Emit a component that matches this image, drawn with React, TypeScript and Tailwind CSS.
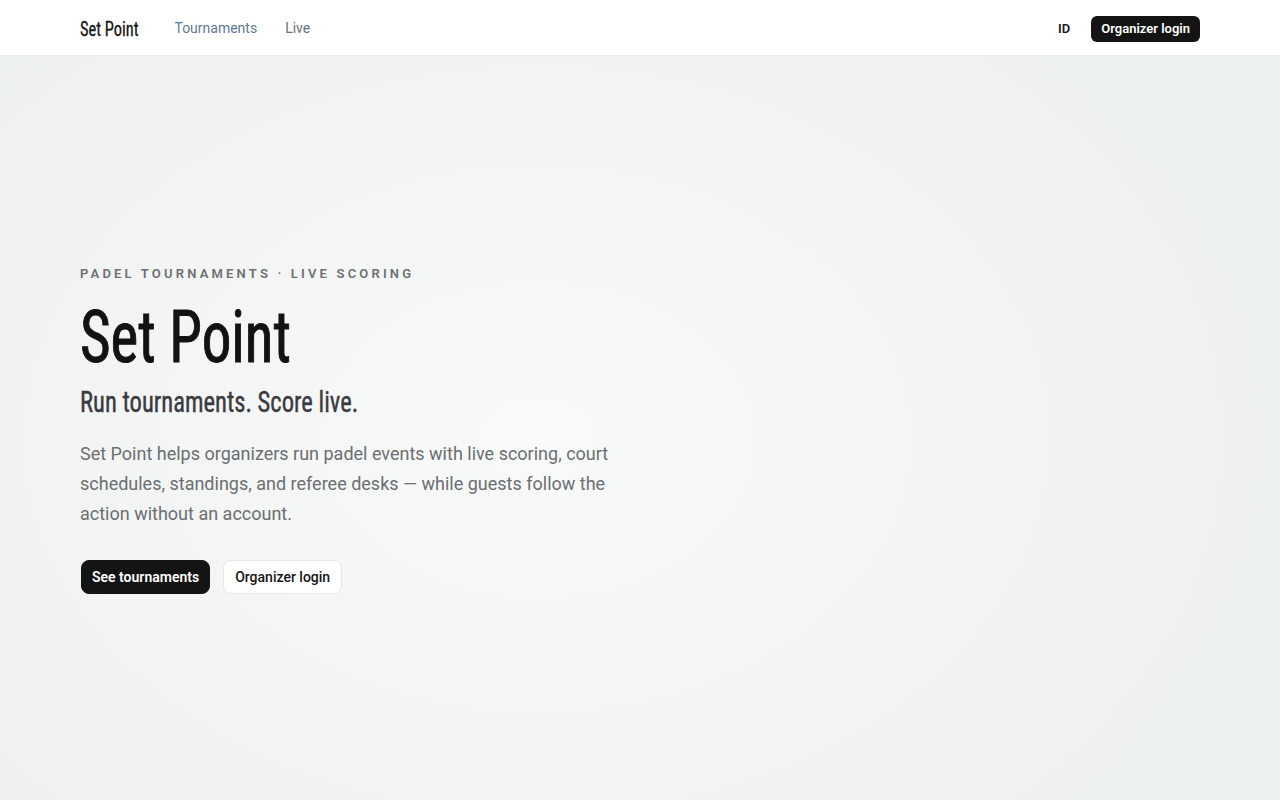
export default function App() {
  return (
    <div className="min-h-screen bg-[radial-gradient(ellipse_60%_70%_at_42%_55%,#f8faf9_0%,#f2f5f3_55%,#edf1ee_100%)] font-['Roboto',sans-serif] text-[#111]">
      <header className="h-14 border-b border-[#e6e9e7] bg-white">
        <div className="mx-auto flex h-full max-w-[1120px] items-center pt-[2px]">
          <div className="font-['Roboto_Condensed',sans-serif] text-[20px] font-normal text-[#151515] [-webkit-text-stroke:0.3px_#151515]">
            <span className="inline-block origin-left scale-x-[0.82]">Set Point</span>
          </div>
          <nav className="ml-[23px] flex items-center gap-7 text-[14px]">
            <a className="text-[#5f7894]">Tournaments</a>
            <a className="text-[#6b7078]">Live</a>
          </nav>
          <div className="ml-auto flex items-center gap-[21px]">
            <span className="text-[13px] font-semibold text-[#1a1a1a]">ID</span>
            <button className="h-[26px] rounded-md bg-[#141414] px-2.5 text-[13px] font-semibold text-white">
              Organizer login
            </button>
          </div>
        </div>
      </header>
      <main className="mx-auto flex min-h-[calc(100vh-56px)] max-w-[1120px] flex-col justify-center pt-[2px]">
        <div className="text-[13px] font-semibold uppercase leading-5 tracking-[0.245em] text-[#6e6f73]">
          Padel tournaments · Live scoring
        </div>
        <h1 className="mt-[18px] font-['Roboto_Condensed',sans-serif] text-[72px] font-normal leading-none text-[#121212] [-webkit-text-stroke:1px_#121212]">
          <span className="inline-block origin-left scale-x-[0.82]">Set Point</span>
        </h1>
        <h2 className="mt-[11px] font-['Roboto_Condensed',sans-serif] text-[30px] font-normal leading-[1.15] text-[#3b3a3f] [-webkit-text-stroke:0.4px_#3b3a3f]">
          <span className="inline-block origin-left scale-x-[0.82]">Run tournaments. Score live.</span>
        </h2>
        <p className="mt-5 max-w-[560px] text-[18px] leading-[1.65] text-[#6c6e72]">
          Set Point helps organizers run padel events with live scoring, court schedules, standings, and referee desks — while guests follow the action without an account.
        </p>
        <div className="mt-8 flex items-center gap-[13px]">
          <button className="ml-px h-[34px] rounded-lg border border-[#141414] bg-[#141414] px-[10px] text-[14px] font-semibold text-white">
            See tournaments
          </button>
          <button className="h-[34px] rounded-lg border border-[#e6e8e7] bg-white px-[11px] text-[14px] font-medium text-[#151515]">
            Organizer login
          </button>
        </div>
      </main>
    </div>
  );
}
